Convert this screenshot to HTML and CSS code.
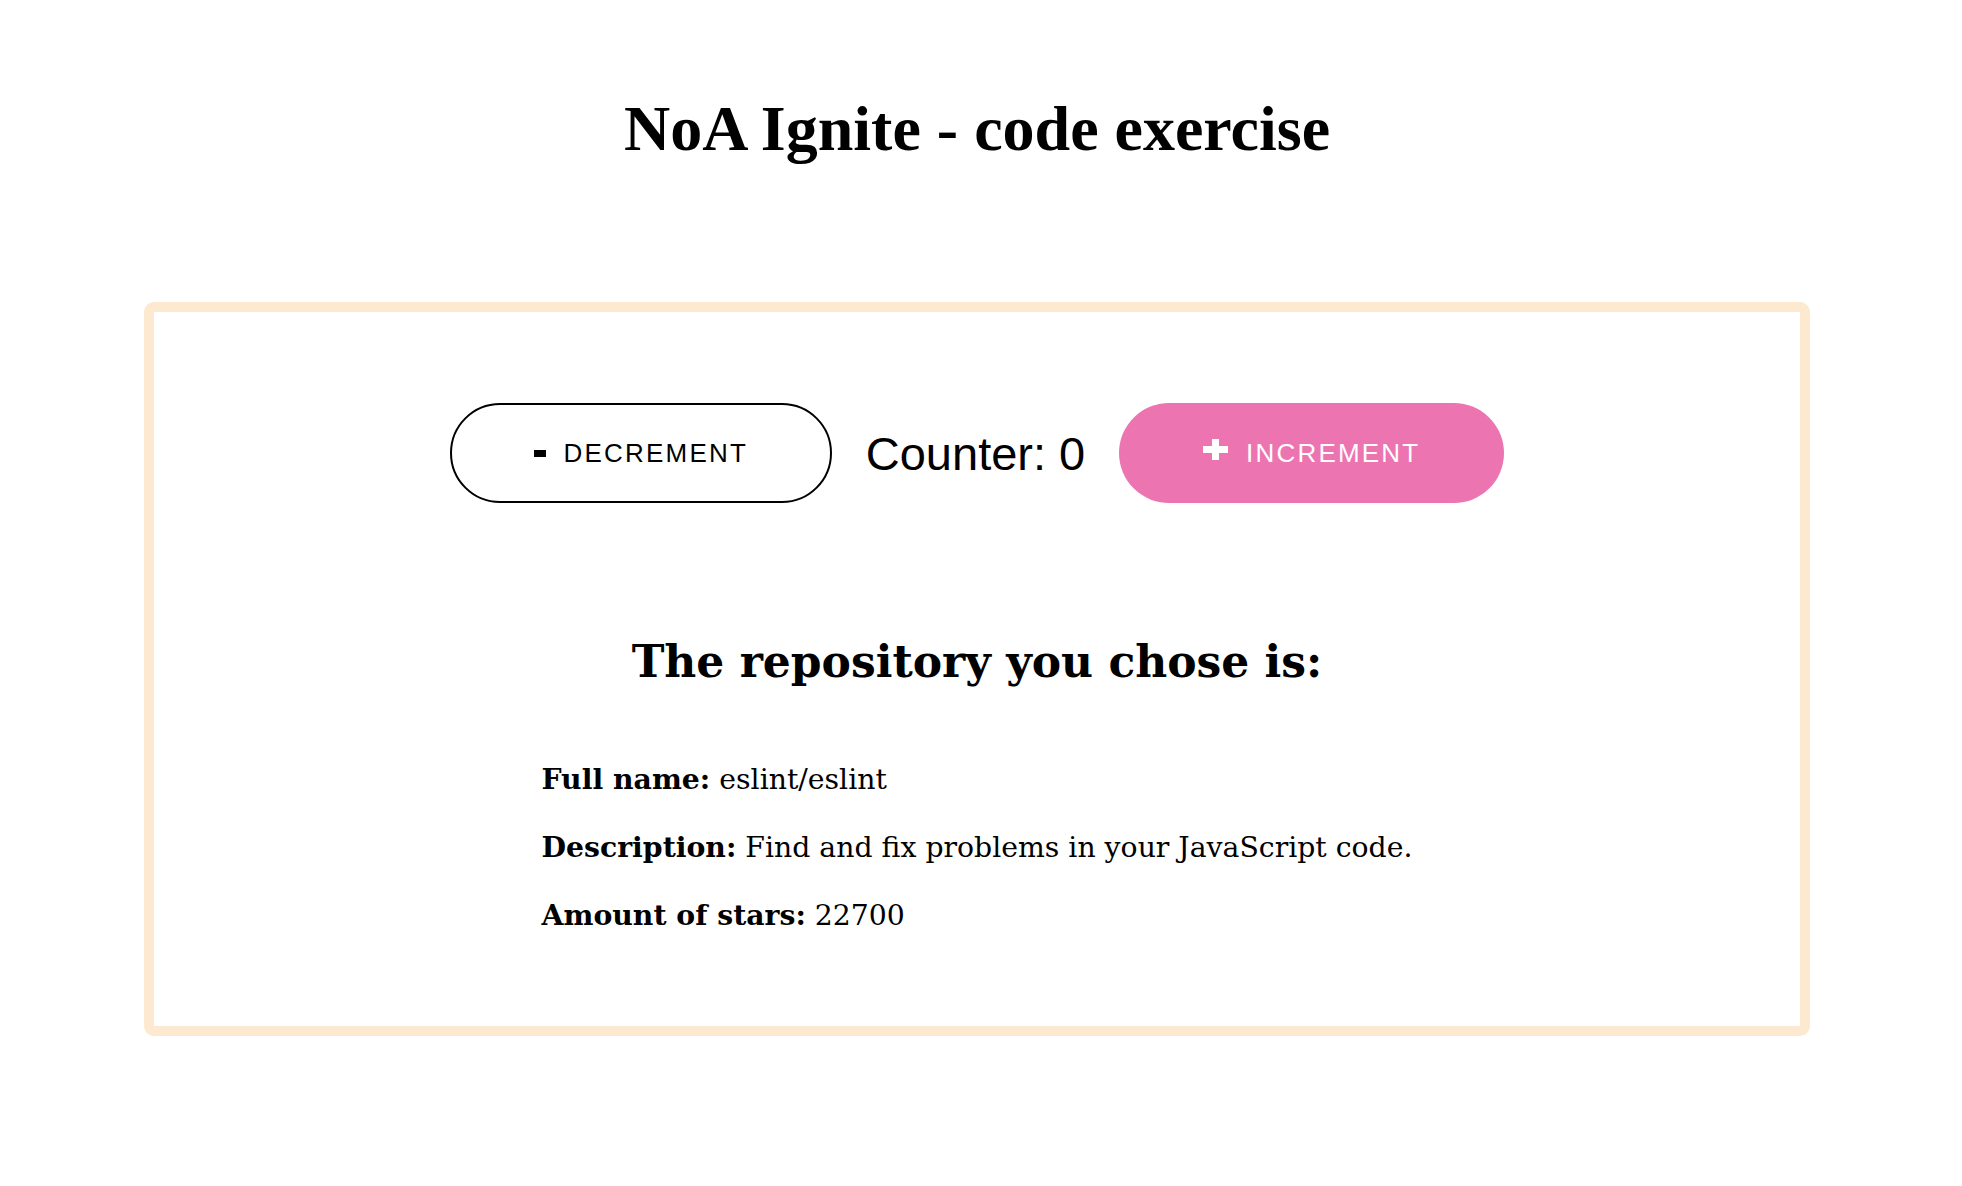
FILE: index.html
```html
<!DOCTYPE html>
<html lang="en">
<head>
<meta charset="utf-8">
<title>NoA Ignite - code exercise</title>
<link rel="stylesheet" href="styles.css">
</head>
<body>
<div class="page">
  <h1 class="title">NoA Ignite - code exercise</h1>
  <section class="card">
    <div class="counter-row">
      <button class="btn btn-outline" type="button"><span class="minus"></span><span class="btn-label">DECREMENT</span></button>
      <span class="counter">Counter: 0</span>
      <button class="btn btn-pink" type="button"><svg class="plus" width="25" height="21" viewBox="0 0 25 21"><rect x="0" y="7" width="25" height="7" fill="#fff"/><rect x="9" y="0" width="7" height="21" fill="#fff"/></svg><span class="btn-label">INCREMENT</span></button>
    </div>
    <h2 class="repo-title">The repository you chose is:</h2>
    <div class="repo-info">
      <p class="repo-line"><b>Full name:</b> eslint/eslint</p>
      <p class="repo-line"><b>Description:</b> Find and fix problems in your JavaScript code.</p>
      <p class="repo-line"><b>Amount of stars:</b> 22700</p>
    </div>
  </section>
</div>
</body>
</html>
```

FILE: styles.css
```css
html, body {
  margin: 0;
  padding: 0;
  background: #ffffff;
  color: #000000;
}

.page {
  padding: 97px 8px 150px 0;
}

.title {
  margin: 0;
  font-family: "Liberation Serif", "Times New Roman", serif;
  font-weight: 700;
  font-size: 64px;
  line-height: 64px;
  text-align: center;
}

.card {
  margin: 141px 144px 0 144px;
  border: 10px solid #fce9cf;
  border-radius: 10px;
  padding: 91px 0 89px 0;
  display: flex;
  flex-direction: column;
  align-items: center;
}

.counter-row {
  display: flex;
  align-items: center;
  justify-content: center;
  gap: 34px;
  height: 100px;
}

.btn {
  display: inline-flex;
  align-items: center;
  justify-content: center;
  gap: 18px;
  height: 100px;
  padding: 0;
  border-radius: 50px;
  font-family: "Liberation Sans", Arial, sans-serif;
  font-size: 26px;
  letter-spacing: 2.2px;
  cursor: pointer;
  box-sizing: border-box;
}

.btn-outline {
  width: 382px;
  background: #ffffff;
  border: 2px solid #000000;
  color: #000000;
}

.btn-pink {
  width: 385px;
  background: #ec74b1;
  border: none;
  color: #ffffff;
}

.btn-label {
  line-height: 1;
}

.minus {
  display: inline-block;
  flex-shrink: 0;
  width: 12px;
  height: 7px;
  background: #000000;
}

.plus {
  display: block;
  flex-shrink: 0;
  margin-top: -8px;
}

.counter {
  font-family: "Liberation Sans", Arial, sans-serif;
  font-size: 47px;
  line-height: 1;
}

.repo-title {
  margin: 136px 0 0 0;
  font-family: "DejaVu Serif", Georgia, serif;
  font-weight: 700;
  font-size: 44px;
  line-height: 45px;
  text-align: center;
}

.repo-info {
  margin-top: 74px;
  text-align: left;
}

.repo-line {
  margin: 0 0 25px 0;
  font-family: "DejaVu Serif", Georgia, serif;
  font-size: 28.3px;
  line-height: 42px;
}

.repo-line:last-child {
  margin-bottom: 0;
}
```
